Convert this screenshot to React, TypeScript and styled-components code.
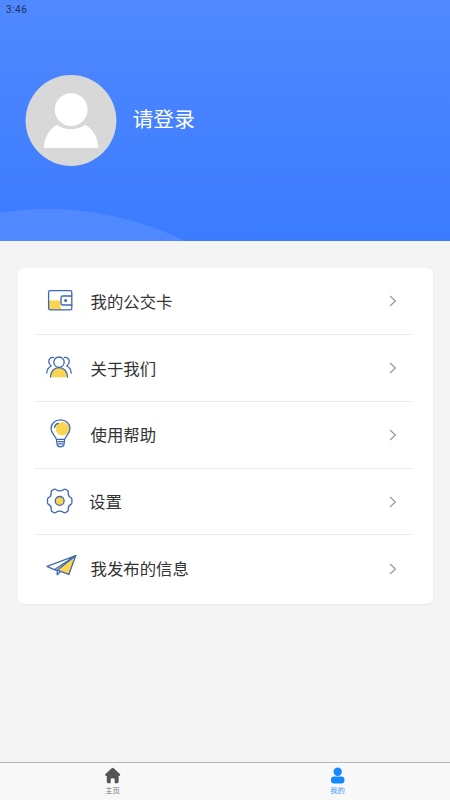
import React from "react";
import styled, { createGlobalStyle } from "styled-components";

const GlobalStyle = createGlobalStyle`
  * { box-sizing: border-box; }
  body { margin: 0; background: #f4f4f4; font-family: "Noto Sans CJK SC", "Noto Sans", sans-serif; }
`;

const Screen = styled.div`
  display: flex;
  flex-direction: column;
  width: 450px;
  height: 800px;
  overflow: hidden;
  background: #f4f4f4;
`;

const Header = styled.header`
  position: relative;
  height: 241px;
  flex: none;
  overflow: hidden;
  background: linear-gradient(#5089ff, #3b7bff);
`;

const Wave = styled.div`
  position: absolute;
  left: -261px;
  top: 208.5px;
  width: 618px;
  height: 618px;
  border-radius: 50%;
  background: rgba(255, 255, 255, 0.1);
`;

const Clock = styled.div`
  height: 20px;
  padding-left: 6px;
  font: 10px/19px Roboto, sans-serif;
  letter-spacing: 0.5px;
  color: #1c3160;
`;

const Profile = styled.div`
  display: flex;
  align-items: center;
  gap: 15.5px;
  padding: 55px 0 0 25px;
`;

const UserName = styled.div`
  margin-top: -6px;
  font-size: 20.8px;
  line-height: 30px;
  color: #fff;
`;

const Card = styled.main`
  flex: none;
  width: 415px;
  height: 336px;
  margin: 27px 0 0 18px;
  padding: 0.6px 20px 0 16px;
  border-radius: 6px;
  background: #fff;
  box-shadow: 0 1px 2px rgba(0, 0, 0, 0.06);
`;

const Row = styled.div`
  display: flex;
  align-items: center;
  height: 66.7px;
  border-bottom: 1px solid #ececec;
  &:last-child { border-bottom: 0; }
`;

const IconSlot = styled.div`
  width: 44px;
  height: 44px;
  margin-left: 6px;
`;

const Label = styled.div<{ $shift?: number }>`
  flex: 1;
  margin-left: ${(p) => 6.5 + (p.$shift ?? 0)}px;
  padding-bottom: 1px;
  font-size: 16.4px;
  line-height: 24px;
  color: #333;
`;

const Chevron = styled.svg`
  width: 10px;
  height: 14px;
  margin-right: 15px;
`;

const TabBar = styled.nav`
  display: flex;
  height: 38.5px;
  margin-top: auto;
  border-top: 1px solid #b8b8b8;
  background: #f8f8f8;
`;

const Tab = styled.div<{ $active?: boolean }>`
  flex: 1;
  display: flex;
  flex-direction: column;
  align-items: center;
  padding-top: 4px;
  font-size: 7.3px;
  line-height: 11px;
  color: ${(p) => (p.$active ? "#3c9aff" : "#777")};
  svg { display: block; }
`;

const BLUE = "#3f68b2";
const YELLOW = "#fbd450";

const Glyph = ({ children }: { children: React.ReactNode }) => (
  <svg width="44" height="44" viewBox="0 0 44 44" fill="none" stroke={BLUE} strokeWidth="1.3" strokeLinejoin="round" strokeLinecap="round">
    {children}
  </svg>
);

const WalletIcon = () => (
  <Glyph>
    <path d="M9 21.6H20.5V28.6L22.5 30.8H9Z" fill={YELLOW} stroke="none" />
    <rect x="8.6" y="11.6" width="23.2" height="19.2" rx="1.6" />
    <path d="M31.8 17H22.8Q21 17 21 18.8V24.2Q21 26 22.8 26H31.8" />
    <circle cx="25.6" cy="21.4" r="1.5" fill={BLUE} stroke="none" />
  </Glyph>
);

const PeopleIcon = () => (
  <Glyph>
    <path d="M10.5 31.2C10.5 25.5 14.2 21.6 19 21.6S27.5 25.5 27.5 31.2Z" fill={YELLOW} stroke="none" />
    <path d="M10.5 31C10.5 25.5 14.2 21.6 19 21.6S27.5 25.5 27.5 31" />
    <circle cx="19" cy="16.2" r="5.2" />
    <path d="M13.5 11.5C10.5 11 8.5 13.2 8.8 16C9 18 10 19.1 11.3 20C8.4 21.2 7 23.5 6.8 27M24.5 11.5C27.5 11 29.5 13.2 29.2 16C29 18 28 19.1 26.7 20C29.6 21.2 31 23.5 31.2 27" />
  </Glyph>
);

const BulbIcon = () => (
  <Glyph>
    <circle cx="22.5" cy="15.8" r="6.8" fill={YELLOW} stroke="none" />
    <path d="M16.4 26.3C15.4 22.8 11 20.5 11 15.6C11 10.5 15.3 6.9 20.5 6.9S30 10.5 30 15.6C30 20.5 25.7 22.8 24.7 26.3L24 31.2Q23.5 33.9 20.5 33.9T17.1 31.2Z" />
    <path d="M17.5 26.3H23.8M18 28.6H23.5M18.6 30.8H22.8" />
    <path d="M14.5 14.5C14.9 12.3 16.2 10.9 18.3 10.4" />
  </Glyph>
);

const GearIcon = () => (
  <Glyph>
    <path d="M14 9.3Q15.2 8.9 16.2 9.8C18 11.2 21.4 11.2 23.2 9.8Q24.2 8.9 25.4 9.3L27.6 10.6Q28.5 11.3 28.2 12.6C28 15 29.3 17 31.2 17.9Q31.9 18.4 31.9 19.6V22.4Q31.9 23.6 31.2 24.1C29.3 25 28 27 28.2 29.4Q28.5 30.7 27.6 31.4L25.4 32.7Q24.2 33.1 23.2 32.2C21.4 30.8 18 30.8 16.2 32.2Q15.2 33.1 14 32.7L11.8 31.4Q10.9 30.7 11.2 29.4C11.4 27 10.1 25 8.2 24.1Q7.5 23.6 7.5 22.4V19.6Q7.5 18.4 8.2 17.9C10.1 17 11.4 15 11.2 12.6Q10.9 11.3 11.8 10.6Z" />
    <circle cx="19.7" cy="20.9" r="4.4" fill={YELLOW} />
  </Glyph>
);

const PlaneIcon = () => (
  <Glyph>
    <path d="M17.2 23.2L35.8 8.6L28.8 27.4Z" fill={YELLOW} />
    <path d="M35.8 8.6L7 19.3L14.3 22.7L35.8 8.6M14.3 22.7L17.2 23.7M17.2 23.2V27.8L20.2 24.8" />
  </Glyph>
);

const rows = [
  { label: "我的公交卡", Icon: WalletIcon },
  { label: "关于我们", Icon: PeopleIcon },
  { label: "使用帮助", Icon: BulbIcon },
  { label: "设置", Icon: GearIcon, shift: -1.5 },
  { label: "我发布的信息", Icon: PlaneIcon },
];

const Avatar = () => (
  <svg width="92" height="92" viewBox="0 0 92 92">
    <circle cx="46" cy="45.5" r="45.4" fill="#d8d8d8" />
    <circle cx="46.2" cy="34.6" r="16.4" fill="#fff" />
    <path d="M18.7 73C19.3 62.5 24.7 53.7 32 49.7C39.8 55.6 52.5 55.6 60.3 49.7C67.6 53.7 73 62.5 73.5 73Z" fill="#fff" />
  </svg>
);

export default function App() {
  return (
    <>
      <GlobalStyle />
      <Screen>
        <Header>
          <Wave />
          <Clock>3:46</Clock>
          <Profile>
            <Avatar />
            <UserName>请登录</UserName>
          </Profile>
        </Header>
        <Card>
          {rows.map(({ label, Icon, shift }) => (
            <Row key={label}>
              <IconSlot><Icon /></IconSlot>
              <Label $shift={shift}>{label}</Label>
              <Chevron viewBox="0 0 10 14" fill="none" stroke="#999" strokeWidth="1.2">
                <path d="M2 2L7.4 7L2 12" />
              </Chevron>
            </Row>
          ))}
        </Card>
        <TabBar>
          <Tab>
            <svg width="18" height="18" viewBox="0 0 18 18" fill="#555">
              <path d="M7.7 1.2Q8.7 .5 9.7 1.2L15.9 7.1Q17 8.7 15.2 9H14.6V14.6Q14.6 16.3 13.3 16.3H10.7V12.2Q10.7 11.2 8.7 11.2T6.7 12.2V16.3H4.1Q2.8 16.3 2.8 14.6V9H2.2Q.4 8.7 1.5 7.1Z" />
            </svg>
            主页
          </Tab>
          <Tab $active>
            <svg width="18" height="18" viewBox="0 0 18 18" fill="#1687ff">
              <circle cx="8.7" cy="4.7" r="4.2" />
              <rect x="2" y="9.6" width="13.4" height="6.8" rx="3" />
            </svg>
            我的
          </Tab>
        </TabBar>
      </Screen>
    </>
  );
}
